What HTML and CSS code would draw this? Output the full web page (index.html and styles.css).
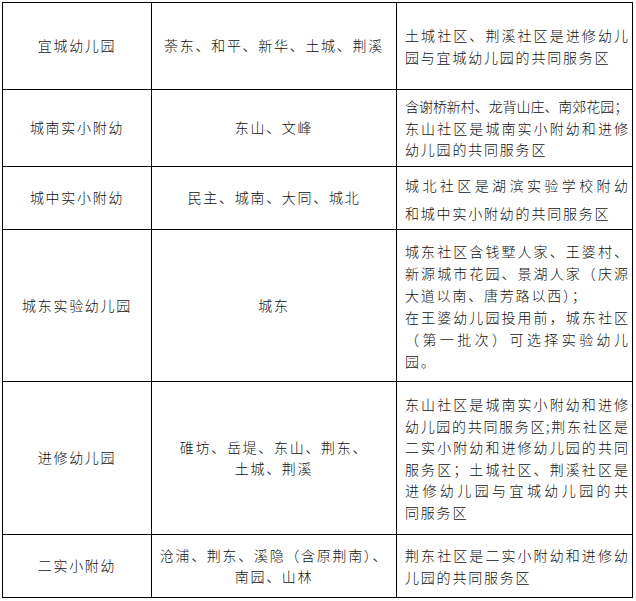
FILE: index.html
```html
<!DOCTYPE html>
<html lang="zh-CN">
<head>
<meta charset="utf-8">
<title>服务区划分</title>
<link rel="stylesheet" href="styles.css">
</head>
<body>
<div class="grid">
  <div class="cell name">宜城幼儿园</div>
  <div class="cell area">荼东、和平、新华、土城、荆溪</div>
  <div class="cell note">
    <span class="ln">土城社区、荆溪社区是进修幼儿</span>
    <span class="end">园与宜城幼儿园的共同服务区</span>
  </div>

  <div class="cell name">城南实小附幼</div>
  <div class="cell area">东山、文峰</div>
  <div class="cell note">
    <span class="ln tight">含谢桥新村、龙背山庄、南郊花园；</span>
    <span class="ln">东山社区是城南实小附幼和进修</span>
    <span class="end">幼儿园的共同服务区</span>
  </div>

  <div class="cell name">城中实小附幼</div>
  <div class="cell area">民主、城南、大同、城北</div>
  <div class="cell note airy">
    <span class="ln">城北社区是湖滨实验学校附幼</span>
    <span class="end">和城中实小附幼的共同服务区</span>
  </div>

  <div class="cell name">城东实验幼儿园</div>
  <div class="cell area">城东</div>
  <div class="cell note wide">
    <span class="ln">城东社区含钱墅人家、王婆村、</span>
    <span class="ln">新源城市花园、景湖人家（庆源</span>
    <span class="end">大道以南、唐芳路以西）；</span>
    <span class="ln">在王婆幼儿园投用前，城东社区</span>
    <span class="ln">（第一批次）可选择实验幼儿</span>
    <span class="end">园。</span>
  </div>

  <div class="cell name">进修幼儿园</div>
  <div class="cell area"><span>碓坊、岳堤、东山、荆东、</span><span>土城、荆溪</span></div>
  <div class="cell note">
    <span class="ln">东山社区是城南实小附幼和进修</span>
    <span class="ln">幼儿园的共同服务区;荆东社区是</span>
    <span class="ln">二实小附幼和进修幼儿园的共同</span>
    <span class="ln">服务区；土城社区、荆溪社区是</span>
    <span class="ln">进修幼儿园与宜城幼儿园的共</span>
    <span class="end">同服务区</span>
  </div>

  <div class="cell name">二实小附幼</div>
  <div class="cell area"><span>沧浦、荆东、溪隐（含原荆南）、</span><span>南园、山林</span></div>
  <div class="cell note">
    <span class="ln">荆东社区是二实小附幼和进修幼</span>
    <span class="end">儿园的共同服务区</span>
  </div>
</div>
</body>
</html>
```

FILE: styles.css
```css
html, body {
  margin: 0;
  padding: 0;
  background: #fff;
}

body {
  padding: 2px;
  font-family: "Noto Sans CJK SC", "Noto Sans", sans-serif;
  font-size: 14px;
  font-weight: 300;
  color: #111;
}

.grid {
  display: grid;
  width: 631px;
  box-sizing: border-box;
  grid-template-columns: 148px 244px 235px;
  grid-template-rows: 86px 76px 62px 151px 152px 62px;
  gap: 1px;
  padding: 1px;
  background: #000;
}

.cell {
  background: #fff;
  display: flex;
  flex-direction: column;
  justify-content: center;
  line-height: 21.5px;
  letter-spacing: 1.7px;
  white-space: nowrap;
  overflow: hidden;
}

.name,
.area {
  align-items: center;
  text-align: center;
  padding: 0 3px;
}

.note {
  padding: 1px 4px 0 8px;
}

.note.airy {
  line-height: 28px;
}

.note.wide {
  line-height: 22px;
}

.note .ln {
  display: block;
  letter-spacing: 0;
  text-align: justify;
  text-align-last: justify;
}

.note .ln.tight {
  letter-spacing: -0.15px;
}

.note .end {
  display: block;
  letter-spacing: 1.8px;
}
```
